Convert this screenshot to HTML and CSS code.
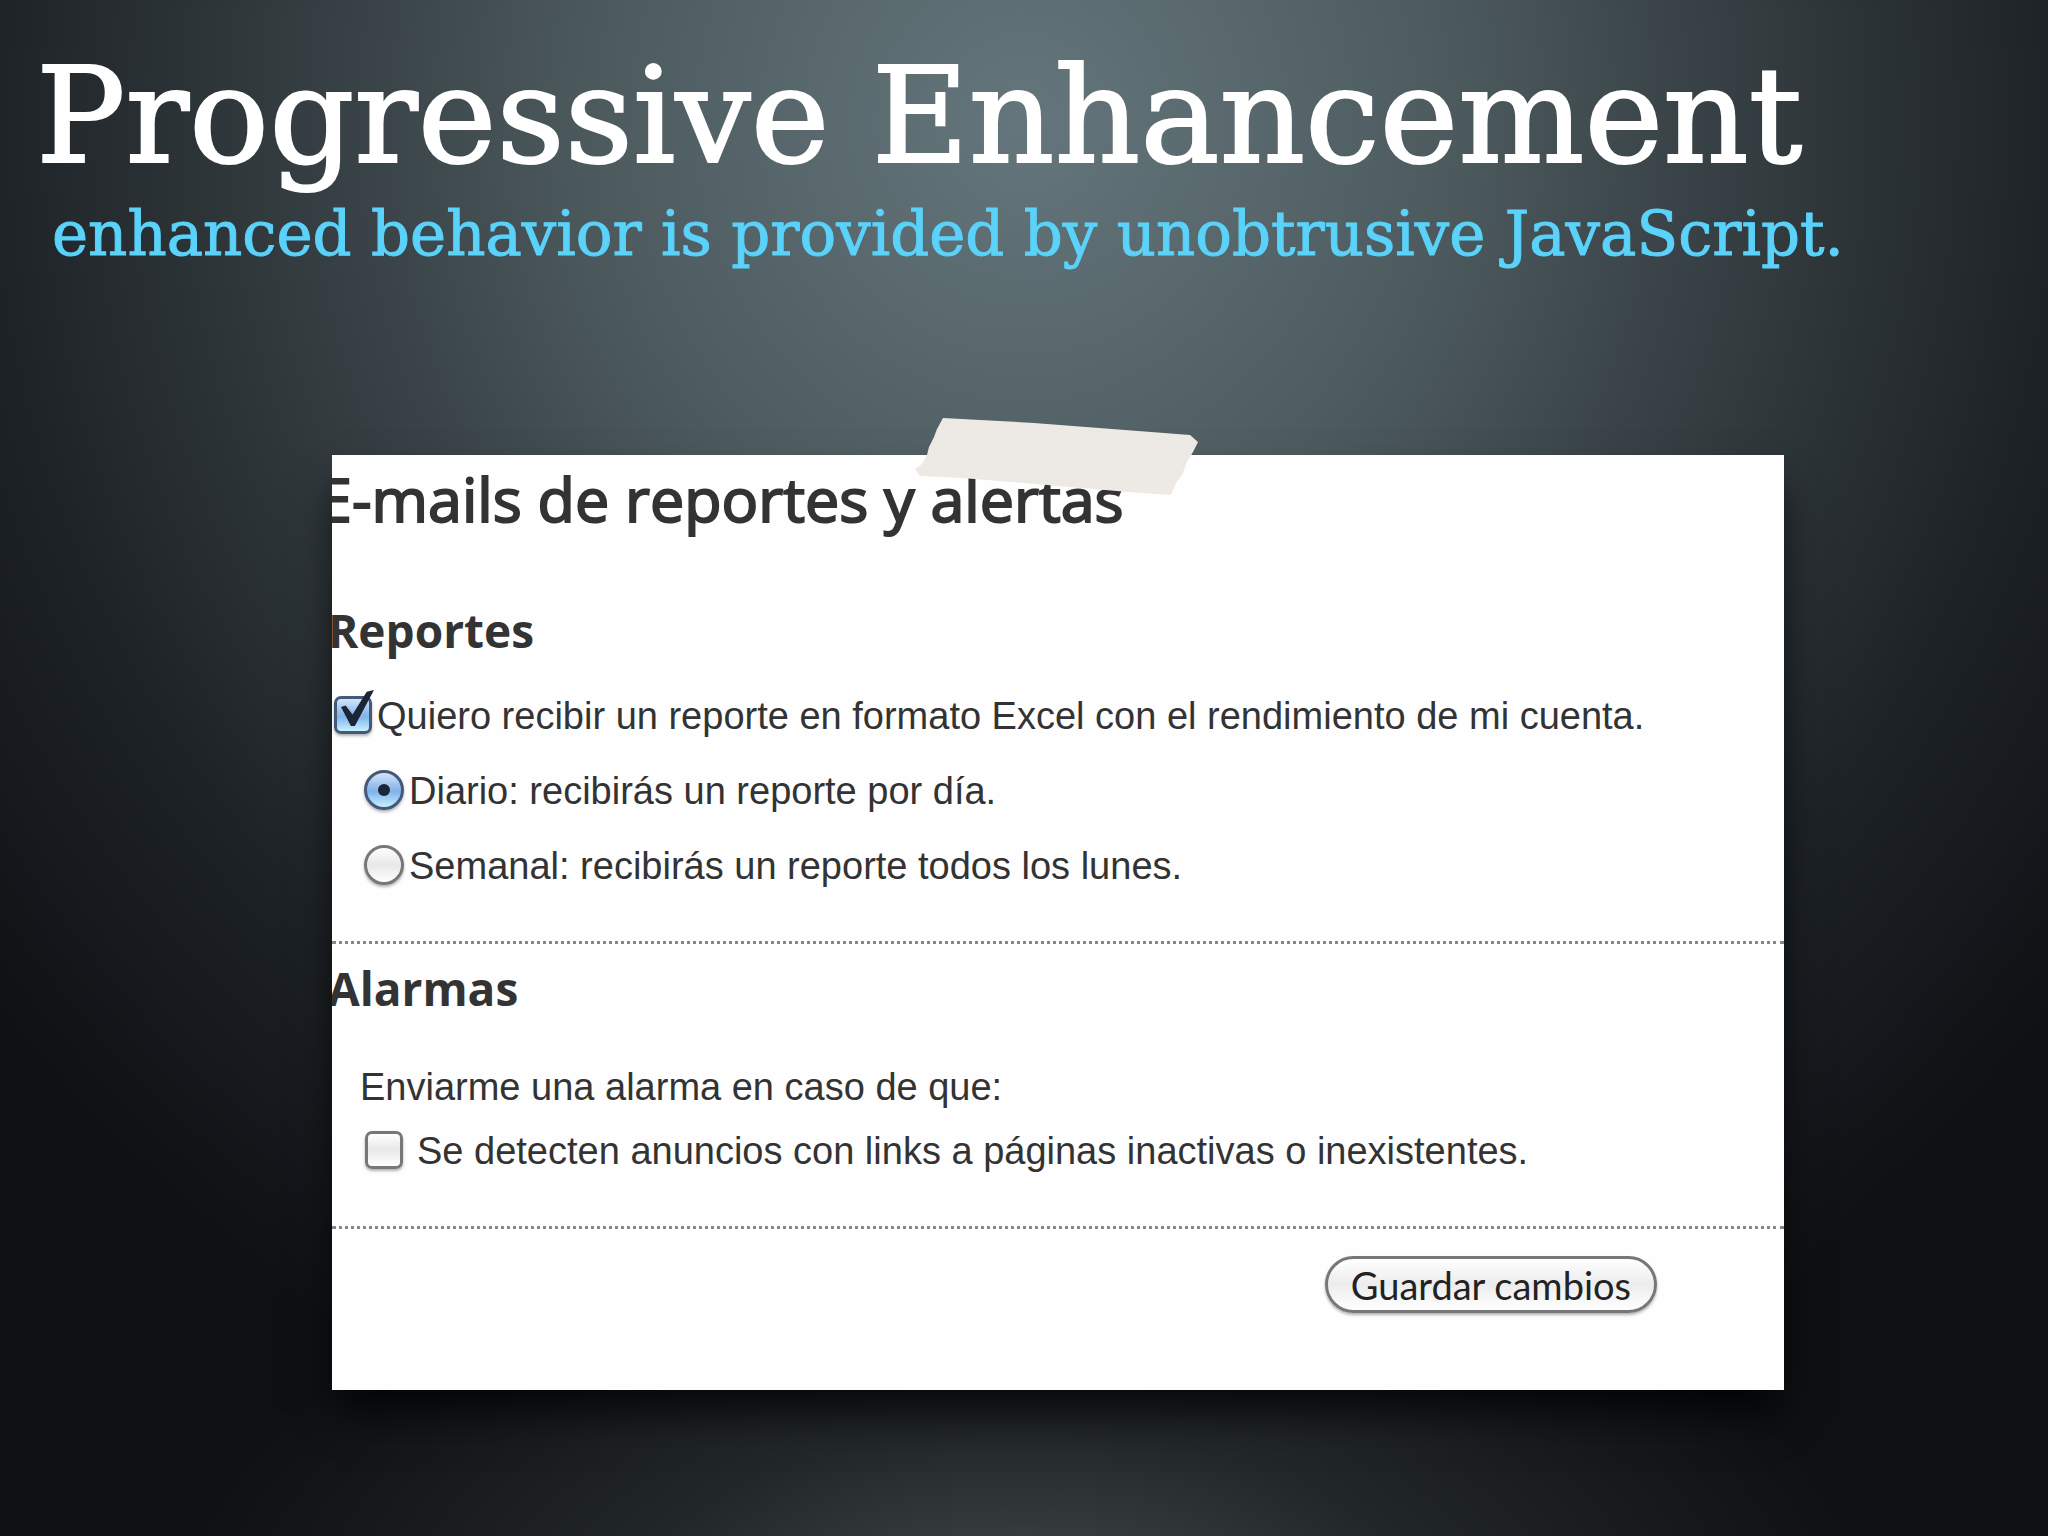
FILE: index.html
```html
<!DOCTYPE html>
<html lang="es">
<head>
    <meta charset="UTF-8">
    <meta name="viewport" content="width=device-width, initial-scale=1.0">
    <title>Progressive Enhancement</title>
    <link rel="stylesheet" href="styles.css">
</head>
<body>
    <header class="slide-header" lang="en">
        <h1>Progressive Enhancement</h1>
        <p>enhanced behavior is provided by unobtrusive JavaScript.</p>
    </header>

    <main class="card">
        <svg class="tape" viewBox="0 0 286 80" aria-hidden="true">
            <path d="M29 1 L120 6 L276 18 L284 25 L279 35 L273 45 L268 58 L262 66 L257 78 L226 76 L110 66 L48 61 L6 59 L1 52 L8 47 L13 38 L15 30 L20 20 L23 12 Z" fill="#edeae6"/>
        </svg>
        <form class="settings" onsubmit="return false">
            <h2>E-mails de reportes y alertas</h2>

            <section class="reports">
                <h3>Reportes</h3>
                <label class="option"><input type="checkbox" id="report" checked onchange="toggleReports()">Quiero recibir un reporte en formato Excel con el rendimiento de mi cuenta.</label>
                <div class="suboptions" id="frequency">
                    <label class="option"><input type="radio" name="frequency" value="daily" checked>Diario: recibirás un reporte por día.</label>
                    <label class="option"><input type="radio" name="frequency" value="weekly">Semanal: recibirás un reporte todos los lunes.</label>
                </div>
            </section>

            <section class="alarms">
                <h3>Alarmas</h3>
                <p>Enviarme una alarma en caso de que:</p>
                <label class="option"><input type="checkbox">Se detecten anuncios con links a páginas inactivas o inexistentes.</label>
            </section>

            <div class="actions">
                <button type="submit">Guardar cambios</button>
            </div>
        </form>
    </main>

    <script>
        function toggleReports() {
            document.getElementById("frequency").hidden = !document.getElementById("report").checked;
        }
    </script>
</body>
</html>
```
FILE: styles.css
```css
* {
    box-sizing: border-box;
}
body {
    margin: 0;
    min-height: 100vh;
    background-color: #0e1013;
    background-image:
        radial-gradient(ellipse 42% 24% at 50% 104%, #43474a 0%, rgba(42, 48, 51, 0.7) 45%, rgba(14, 16, 19, 0) 100%),
        radial-gradient(ellipse 66% 92% at 50% 8%, #64767c 0%, #4e5c60 30%, #363f43 52%, #1e2327 76%, #0e1013 100%);
    color: #333;
    font-family: 'Liberation Sans', Arial, sans-serif;
}
h1, h2, h3, p {
    margin: 0;
    font-weight: normal;
}
.slide-header {
    padding: 36px 36px 0;
    font-family: 'DejaVu Serif', serif;
    white-space: nowrap;
}
.slide-header h1 {
    color: #fff;
    font-size: 133px;
    line-height: 160px;
    -webkit-text-stroke: 2px #fff;
}
.slide-header p {
    padding-left: 16px;
    color: #5ad2fa;
    font-size: 61px;
    line-height: 76px;
    -webkit-text-stroke: 1px #5ad2fa;
}
.card {
    position: relative;
    width: 70.9%;
    margin: 183px auto 0 332px;
    background: #fefefe;
    box-shadow: 0 28px 40px -6px rgba(0, 0, 0, 0.8);
}
.tape {
    position: absolute;
    top: -38px;
    left: 582px;
    width: 286px;
    z-index: 1;
}
.settings {
    overflow: hidden;
    font-size: 38px;
    line-height: 50px;
}
.settings h2 {
    margin: 8px 0 0 -14px;
    font-family: 'Open Sans', sans-serif;
    font-size: 61px;
    line-height: 72px;
    -webkit-text-stroke: 2px #333;
}
.settings h3 {
    margin-left: -4px;
    padding-bottom: 4px;
    font-family: 'Open Sans', sans-serif;
    font-size: 46px;
    font-weight: 700;
    line-height: 64px;
}
.reports, .alarms {
    border-bottom: 3px dotted #888;
}
.reports {
    padding: 63px 0 50px;
}
.option {
    display: flex;
    align-items: center;
    gap: 5px;
    padding-left: 2px;
    white-space: nowrap;
}
.reports .option {
    margin-top: 25px;
}
.suboptions {
    padding-left: 30px;
}
.alarms {
    padding: 12px 0 50px;
}
.alarms p {
    margin: 38px 0 14px;
    padding-left: 28px;
}
.alarms .option {
    gap: 14px;
    padding-left: 33px;
}
input {
    position: relative;
    flex: none;
    appearance: none;
    width: 38px;
    height: 38px;
    margin: 0 0 2px;
    border: 3px solid #777;
    border-radius: 7px;
    background: linear-gradient(#fff, #e8e8e8 50%, #fff);
    box-shadow: 0 2px 3px rgba(0, 0, 0, 0.3);
}
input[type="radio"] {
    width: 40px;
    height: 40px;
    border-radius: 50%;
}
input:checked {
    border-color: #44597a;
    background: linear-gradient(#d3e4f8, #8fb9ea 45%, #7fb4ea 55%, #c9f0ff);
}
input:checked::before {
    content: "";
    position: absolute;
    background: #1a2537;
}
/* the tick runs out over the top right corner of the box */
input[type="checkbox"]:checked::before {
    top: -9px;
    left: 4px;
    width: 33px;
    height: 36px;
    clip-path: polygon(0 47%, 14% 43%, 35% 68%, 78% 5%, 100% 0, 42% 100%, 30% 100%);
}
input[type="radio"]:checked::before {
    top: 11px;
    left: 11px;
    width: 12px;
    height: 12px;
    border-radius: 50%;
}
.actions {
    display: flex;
    justify-content: flex-end;
    padding: 27px 127px 77px 0;
}
button {
    height: 57px;
    padding: 0 23px;
    border: 3px solid #777;
    border-radius: 29px;
    background: linear-gradient(#fff, #ececec 50%, #fff);
    box-shadow: 0 2px 3px rgba(0, 0, 0, 0.3);
    color: #222;
    font-family: Lato, sans-serif;
    font-size: 38px;
    line-height: 48px;
}
```
